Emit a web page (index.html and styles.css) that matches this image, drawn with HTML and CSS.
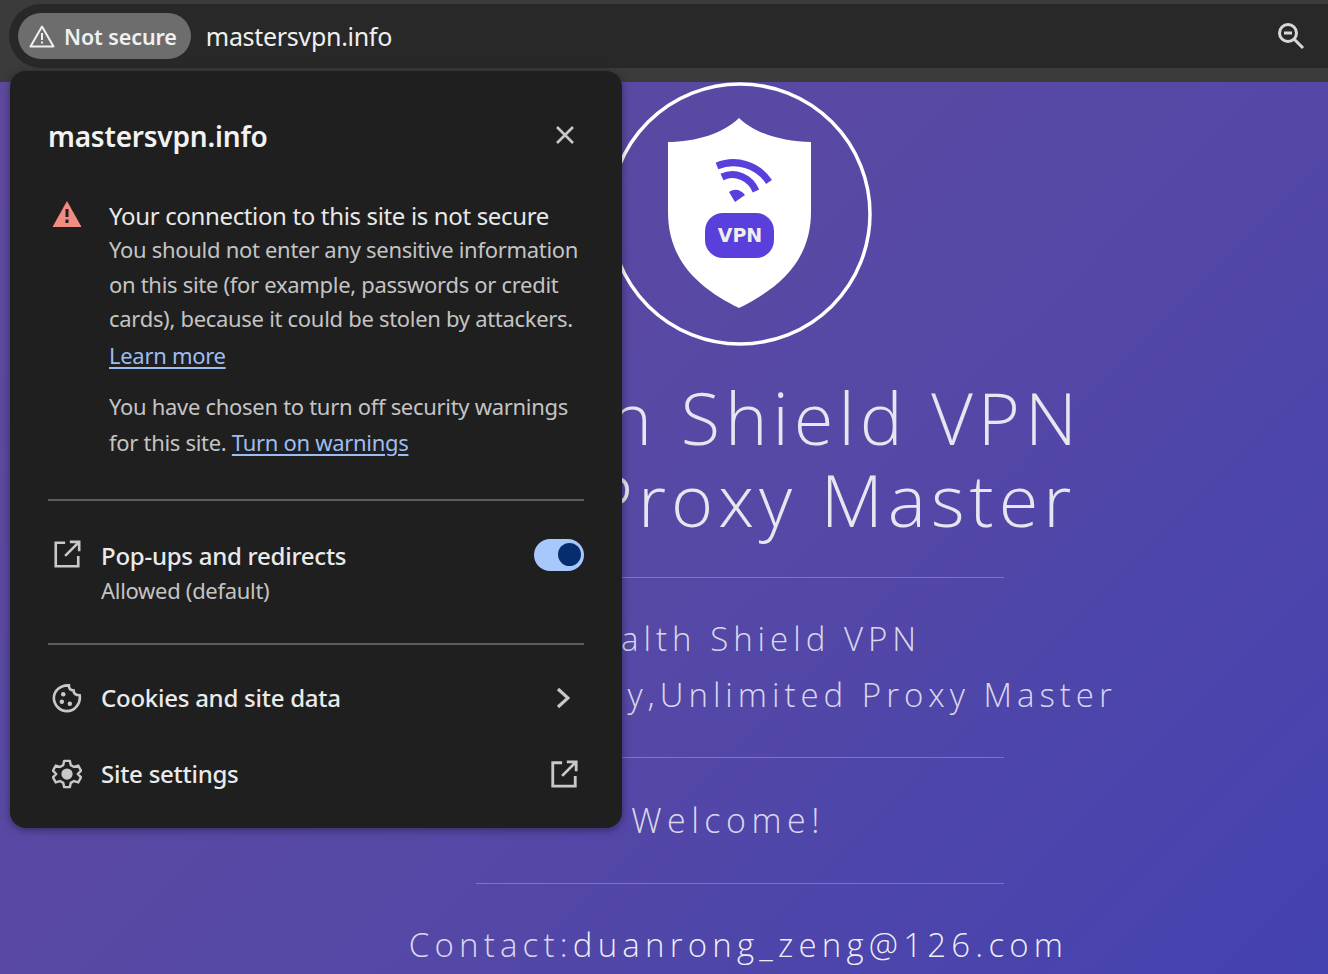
FILE: index.html
```html
<!DOCTYPE html>
<html lang="en">
<head>
  <meta charset="UTF-8">
  <title>Stealth Shield VPN</title>
  <link rel="stylesheet" href="styles.css">
</head>
<body>

  <!-- Browser toolbar -->
  <div class="toolbar">
    <div class="omnibox">
      <div class="chip">
        <svg class="chip-icon" viewBox="0 0 26 24"><path d="M13 2.500 24.500 22.500H1.500z" fill="none" stroke="currentColor" stroke-width="2" stroke-linejoin="round"/><path d="M13 9v7M13 17.500v2" fill="none" stroke="currentColor" stroke-width="2"/></svg>
        <span>Not secure</span>
      </div>
      <span class="url">mastersvpn.info</span>
      <svg class="zoom-icon" viewBox="0 0 28 28"><circle cx="11" cy="11" r="8.500" fill="none" stroke="currentColor" stroke-width="3"/><path d="M7 11h8M17 17l9 9" fill="none" stroke="currentColor" stroke-width="3"/></svg>
    </div>
  </div>

  <!-- Page behind the popup -->
  <div class="page">
    <svg class="logo" viewBox="0 0 264 264">
      <circle cx="132" cy="132" r="130" fill="none" stroke="#fff" stroke-width="3.500"/>
      <path d="M131 36C116 51 88 60 60 60V130C60 178 90 206 131 226C172 206 203 178 203 130V60C175 60 146 51 131 36Z" fill="#fff"/>
      <path d="M109 84C128 76 150 83 161 100M114 95C127 89 142 95 148 109" fill="none" stroke="#5b3fdc" stroke-width="7"/>
      <path d="M121 110C127 106 133 108 137 113L127 120Z" fill="#5b3fdc"/>
      <rect x="97" y="131" width="69" height="45" rx="18" fill="#5b3fdc"/>
      <text class="logo-text" x="132" y="160" text-anchor="middle">VPN</text>
    </svg>
    <h1 class="hero-title">Stealth Shield VPN<br>Free Proxy Master</h1>
    <hr class="rule rule-first">
    <p class="hero-sub">Stealth Shield VPN<br>Super Security,Unlimited Proxy Master</p>
    <hr class="rule rule-second">
    <p class="welcome">Welcome!</p>
    <hr class="rule rule-third">
    <p class="contact">Contact:<span class="mail">duanrong_zeng@126.com</span></p>
  </div>

  <!-- Site info popup -->
  <div class="popup">
    <div class="popup-head">
      <h2>mastersvpn.info</h2>
      <svg class="close-icon" viewBox="0 0 20 20"><path d="M2 2 18 18M18 2 2 18" fill="none" stroke="currentColor" stroke-width="2.600"/></svg>
    </div>

    <div class="warning">
      <svg class="warning-icon" viewBox="0 0 30 28"><path d="M15 1 29.500 27H.5z" fill="#f28b82"/><path d="M15 9v8M15 19.500v3.500" fill="none" stroke="#1f1f1f" stroke-width="3"/></svg>
      <div class="warning-body">
        <div class="warning-title">Your connection to this site is not secure</div>
        <p class="warning-text">You should not enter any sensitive information on this site (for example, passwords or credit cards), because it could be stolen by attackers.</p>
        <a class="link learn-more" href="#">Learn more</a>
        <p class="warning-note">You have chosen to turn off security warnings for this site. <a class="link" href="#">Turn on warnings</a></p>
      </div>
    </div>

    <div class="divider"></div>

    <div class="perm-row">
      <svg class="row-icon" viewBox="0 0 32 32"><path d="M14 4H4V29H28V18M19 3H29V13M29 3 14 18" fill="none" stroke="currentColor" stroke-width="2.800"/></svg>
      <div class="perm-text">
        <div class="row-label">Pop-ups and redirects</div>
        <div class="perm-state">Allowed (default)</div>
      </div>
      <div class="toggle"><div class="toggle-knob"></div></div>
    </div>

    <div class="divider"></div>

    <div class="menu-row menu-first">
      <svg class="row-icon" viewBox="0 0 32 32"><path d="M18 2.500C18 6 20 8 23 8C23 11 25.500 13 29.500 13C31 22 24 30 16 30C8.500 30 2 23.500 2 16C2 8.500 9 2 18 2.500Z" fill="none" stroke="currentColor" stroke-width="2.800"/><circle cx="12" cy="12" r="2.400" fill="currentColor"/><circle cx="10.500" cy="20" r="2.400" fill="currentColor"/><circle cx="19" cy="22" r="2.400" fill="currentColor"/></svg>
      <span class="row-label">Cookies and site data</span>
      <svg class="chevron" viewBox="0 0 14 22"><path d="M2 2 12 11 2 20" fill="none" stroke="currentColor" stroke-width="3.200"/></svg>
    </div>

    <div class="menu-row">
      <svg class="row-icon" viewBox="0 0 32 32"><path d="M13 2H19L20 6.500L23.500 8.500L28 7L31 12.500L27.500 16L31 19.500L28 25L23.500 23.500L20 25.500L19 30H13L12 25.500L8.500 23.500L4 25L1 19.500L4.500 16L1 12.500L4 7L8.500 8.500L12 6.500Z" fill="none" stroke="currentColor" stroke-width="2.600" stroke-linejoin="round"/><circle cx="16" cy="16" r="6" fill="currentColor"/></svg>
      <span class="row-label">Site settings</span>
      <svg class="row-icon" viewBox="0 0 32 32"><path d="M14 4H4V29H28V18M19 3H29V13M29 3 14 18" fill="none" stroke="currentColor" stroke-width="3"/></svg>
    </div>
  </div>

</body>
</html>
```

FILE: styles.css
```css
body {
  margin: 0;
  height: 974px;
  overflow: hidden;
  position: relative;
  font-family: "Noto Sans", Arial, sans-serif;
  background: #4f47a8;
}

.toolbar {
  height: 78px;
  padding-top: 4px;
  background: #3b3b3b;
}

.omnibox {
  height: 64px;
  margin-left: 9px;
  padding: 0 23px 0 9px;
  display: flex;
  align-items: center;
  background: #282828;
  border-radius: 32px 0 0 32px;
  color: #f0f0f0;
}

.chip {
  height: 46px;
  padding: 0 14px 0 11px;
  display: flex;
  align-items: center;
  gap: 9px;
  background: #6d6d6d;
  border-radius: 23px;
  font-size: 21.500px;
  font-weight: 600;
  letter-spacing: -0.1px;
}

.chip-icon {
  width: 26px;
  height: 24px;
}

.url {
  margin-left: 15px;
  font-size: 25px;
  letter-spacing: -0.3px;
  flex: 1;
}

.zoom-icon {
  width: 28px;
  height: 28px;
  color: #d8d8d8;
}

.page {
  height: 892px;
  box-sizing: border-box;
  padding-left: 152px;
  display: flex;
  flex-direction: column;
  align-items: center;
  color: rgba(255, 255, 255, 0.8);
  background: linear-gradient(135deg, #604a9e 0%, #5548a6 55%, #4442b0 100%);
  font-family: "Open Sans", Arial, sans-serif;
  font-weight: 300;
  text-align: center;
  white-space: nowrap;
}

.logo {
  width: 264px;
  height: 264px;
  flex: none;
}

.logo-text {
  font-family: "DejaVu Sans", Arial, sans-serif;
  font-size: 19px;
  font-weight: 700;
  fill: #eee;
}

.hero-title {
  margin: 30px 0 0;
  font-size: 72px;
  line-height: 82px;
  font-weight: 300;
  letter-spacing: 5px;
  color: #e6e6f0;
}

.rule {
  width: 528px;
  margin: 0;
  border: 0;
  border-top: 1px solid rgba(255, 255, 255, 0.25);
  flex: none;
}

.rule-first {
  margin-top: 37px;
}

.hero-sub {
  margin: 33px 0 0;
  font-size: 33px;
  line-height: 56px;
  letter-spacing: 5px;
}

.rule-second {
  margin-top: 34px;
}

.welcome {
  margin: 38px 0 0;
  padding-right: 24px;
  font-size: 34px;
  line-height: 48px;
  letter-spacing: 5.500px;
}

.rule-third {
  margin-top: 39px;
}

.contact {
  margin: 37px 0 0;
  padding-right: 3px;
  font-size: 33px;
  line-height: 48px;
  letter-spacing: 5.200px;
}

.mail {
  color: rgba(255, 255, 255, 0.92);
}

/* site info popup */
.popup {
  position: absolute;
  left: 10px;
  top: 71px;
  width: 612px;
  height: 757px;
  box-sizing: border-box;
  padding: 44px 38px 0;
  background: #1f1f1f;
  border-radius: 16px;
  box-shadow: 0 2px 8px rgba(0, 0, 0, 0.4);
  color: #e8e8e8;
}

.popup-head {
  display: flex;
  justify-content: space-between;
  align-items: center;
  height: 42px;
}

.popup-head h2 {
  margin: 0;
  font-size: 28px;
  font-weight: 600;
  letter-spacing: -0.2px;
  color: #f2f2f2;
}

.close-icon {
  width: 20px;
  height: 20px;
  margin-right: 9px;
  margin-bottom: 2px;
  color: #c8c8c8;
}

.warning {
  display: flex;
  gap: 27px;
  margin-top: 43px;
  padding-left: 4px;
}

.warning-icon {
  width: 30px;
  height: 28px;
  flex: none;
}

.warning-title {
  font-size: 24px;
  line-height: 32px;
  letter-spacing: -0.35px;
  color: #e8e8e8;
}

.warning-text {
  margin: 0;
  font-size: 22px;
  line-height: 34.500px;
  letter-spacing: -0.3px;
  color: #c4c4c4;
}

.link {
  color: #9dbdf0;
  text-decoration: underline;
  text-underline-offset: 3px;
}

.learn-more {
  display: block;
  font-size: 22px;
  line-height: 38px;
  letter-spacing: -0.3px;
}

.warning-note {
  margin: 14px 0 0;
  font-size: 22px;
  line-height: 36px;
  letter-spacing: -0.3px;
  color: #c4c4c4;
}

.divider {
  height: 2px;
  background: #5c5c5c;
}

.warning + .divider {
  margin-top: 39px;
}

.perm-row {
  display: flex;
  gap: 19px;
  align-items: flex-start;
  padding: 38px 0 36px 4px;
}

.row-icon {
  width: 30px;
  height: 30px;
  flex: none;
  color: #c8c8c8;
}

.perm-text {
  flex: 1;
}

.row-label {
  flex: 1;
  font-size: 24px;
  line-height: 34px;
  font-weight: 500;
  letter-spacing: -0.25px;
  color: #eaeaea;
}

.perm-state {
  font-size: 22px;
  line-height: 34px;
  letter-spacing: -0.3px;
  color: #c4c4c4;
}

.toggle {
  width: 50px;
  height: 32px;
  display: flex;
  justify-content: flex-end;
  align-items: center;
  padding-right: 3px;
  box-sizing: border-box;
  background: #a8c7fa;
  border-radius: 16px;
}

.toggle-knob {
  width: 23px;
  height: 23px;
  background: #062e6f;
  border-radius: 50%;
}

.menu-row {
  display: flex;
  align-items: center;
  gap: 19px;
  height: 76px;
  padding: 0 5px 0 4px;
}

.menu-first {
  margin-top: 15px;
}

.chevron {
  width: 14px;
  height: 22px;
  margin-right: 9px;
  color: #c8c8c8;
}
```
